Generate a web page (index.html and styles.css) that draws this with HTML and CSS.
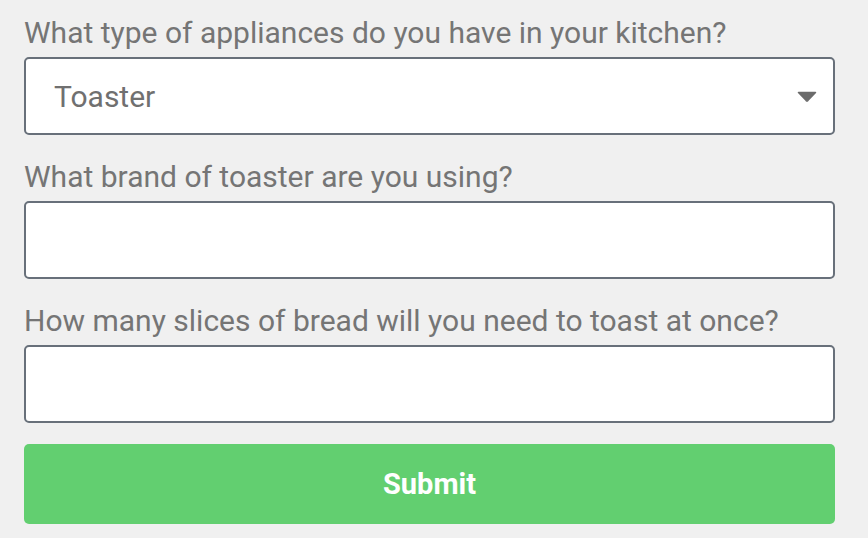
FILE: index.html
```html
<!DOCTYPE html>
<html lang="en">
<head>
    <meta charset="UTF-8">
    <meta name="viewport" content="width=device-width, initial-scale=1.0">
    <title>Kitchen Appliances</title>
    <link rel="stylesheet" href="styles.css">
</head>
<body>

    <form class="survey">
        <div class="field">
            <label for="appliance">What type of appliances do you have in your kitchen?</label>
            <div class="select-wrap">
                <select id="appliance" name="appliance">
                    <option>Toaster</option>
                    <option>Microwave</option>
                    <option>Oven</option>
                </select>
                <svg class="arrow" width="20" height="11" viewBox="0 0 20 11">
                    <path d="M1.5 1.5 H18.5 L10.8 9.6 Q10 10.4 9.2 9.6 Z" fill="#6b6b6b" stroke="#6b6b6b" stroke-width="1.5" stroke-linejoin="round"/>
                </svg>
            </div>
        </div>

        <div class="field">
            <label for="brand">What brand of toaster are you using?</label>
            <input type="text" id="brand" name="brand">
        </div>

        <div class="field">
            <label for="slices">How many slices of bread will you need to toast at once?</label>
            <input type="text" id="slices" name="slices">
        </div>

        <button type="submit" class="submit-btn">Submit</button>
    </form>

</body>
</html>
```

FILE: styles.css
```css
* {
    margin: 0;
    padding: 0;
    box-sizing: border-box;
}
body {
    font-family: Roboto, 'Liberation Sans', Arial, sans-serif;
    background-color: #f0f0f0;
    color: #757575;
}
.survey {
    width: 811px;
    margin-left: 24px;
    padding-top: 17px;
    display: flex;
    flex-direction: column;
}
.field {
    display: flex;
    flex-direction: column;
    margin-bottom: 26px;
}
.field:nth-child(3) {
    margin-bottom: 21px;
}
.field label {
    font-size: 30px;
    line-height: 32px;
    margin-bottom: 8px;
}
.field input,
.field select {
    width: 100%;
    height: 78px;
    background-color: #fff;
    border: 2px solid #68707a;
    border-radius: 5px;
    font-family: inherit;
    font-size: 30px;
    color: #707070;
    outline: none;
}
.field select {
    appearance: none;
    -webkit-appearance: none;
    padding-left: 28px;
}
.select-wrap {
    position: relative;
}
.select-wrap .arrow {
    position: absolute;
    right: 18px;
    top: 34px;
    pointer-events: none;
}
.submit-btn {
    height: 80px;
    background-color: #62cf70;
    color: #fff;
    border: none;
    border-radius: 5px;
    font-family: inherit;
    font-size: 29px;
    font-weight: bold;
    cursor: pointer;
}
```
